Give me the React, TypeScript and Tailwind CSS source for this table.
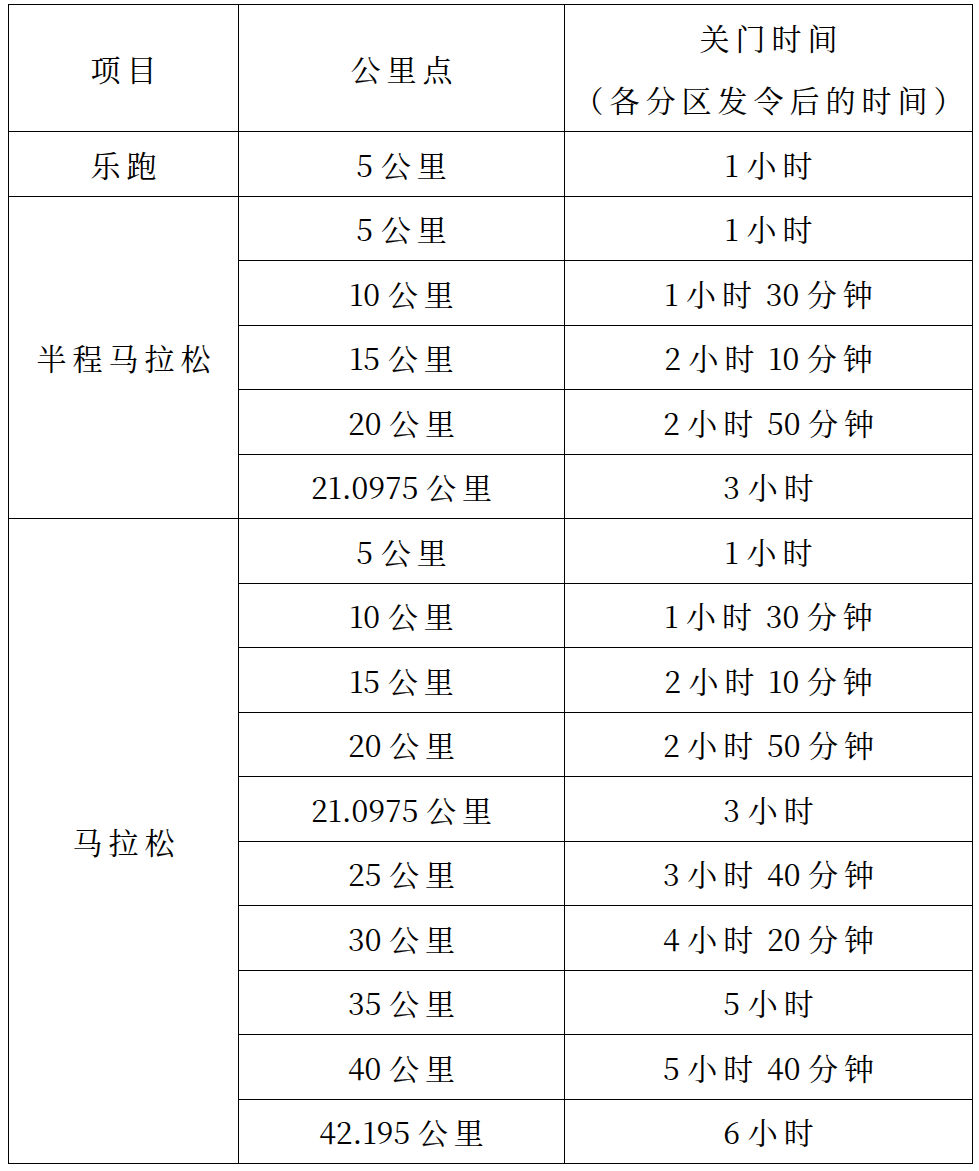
type Row = { km: string; time: string };

const halfRows: Row[] = [
  { km: '5 公里', time: '1 小时' },
  { km: '10 公里', time: '1 小时 30 分钟' },
  { km: '15 公里', time: '2 小时 10 分钟' },
  { km: '20 公里', time: '2 小时 50 分钟' },
  { km: '21.0975 公里', time: '3 小时' },
];

const fullRows: Row[] = [
  { km: '5 公里', time: '1 小时' },
  { km: '10 公里', time: '1 小时 30 分钟' },
  { km: '15 公里', time: '2 小时 10 分钟' },
  { km: '20 公里', time: '2 小时 50 分钟' },
  { km: '21.0975 公里', time: '3 小时' },
  { km: '25 公里', time: '3 小时 40 分钟' },
  { km: '30 公里', time: '4 小时 20 分钟' },
  { km: '35 公里', time: '5 小时' },
  { km: '40 公里', time: '5 小时 40 分钟' },
  { km: '42.195 公里', time: '6 小时' },
];

const CJK = /([\u4e00-\u9fff\uff08\uff09]+)/;

// CJK runs get the wide character spacing, digits stay tight
function Txt({ text }: { text: string }) {
  const parts = text.split(CJK).filter(Boolean);
  return (
    <>
      {parts.map((p, i) =>
        CJK.test(p) ? (
          <span
            key={i}
            className={
              i === parts.length - 1
                ? 'leading-none tracking-[6px] -mr-[6px]'
                : 'leading-none tracking-[6px]'
            }
          >
            {p}
          </span>
        ) : (
          <span key={i} className="leading-none">
            {p}
          </span>
        ),
      )}
    </>
  );
}

const cell =
  "border border-black p-0 text-center align-middle font-['Noto_Serif_CJK_SC',serif] text-[30px] font-normal leading-[40px] text-black";

export default function App() {
  return (
    <div className="min-h-[1171px] bg-white pl-2 pt-1">
      <table className="w-[964px] table-fixed border-collapse">
        <colgroup>
          <col className="w-[230px]" />
          <col className="w-[326px]" />
          <col className="w-[408px]" />
        </colgroup>
        <thead>
          <tr className="h-[127px]">
            <th className={cell}>
              <Txt text="项目" />
            </th>
            <th className={cell}>
              <Txt text="公里点" />
            </th>
            <th className={cell}>
              <div className="leading-[62px]">
                <div>
                  <Txt text="关门时间" />
                </div>
                <div>
                  <Txt text="（各分区发令后的时间）" />
                </div>
              </div>
            </th>
          </tr>
        </thead>
        <tbody>
          <tr className="h-[64.5px]">
            <td className={cell}>
              <Txt text="乐跑" />
            </td>
            <td className={cell}>
              <Txt text="5 公里" />
            </td>
            <td className={cell}>
              <Txt text="1 小时" />
            </td>
          </tr>
          {halfRows.map((r, i) => (
            <tr key={`h${i}`} className="h-[64.5px]">
              {i === 0 && (
                <td rowSpan={halfRows.length} className={cell}>
                  <Txt text="半程马拉松" />
                </td>
              )}
              <td className={cell}>
                <Txt text={r.km} />
              </td>
              <td className={cell}>
                <Txt text={r.time} />
              </td>
            </tr>
          ))}
          {fullRows.map((r, i) => (
            <tr key={`f${i}`} className="h-[64.5px]">
              {i === 0 && (
                <td rowSpan={fullRows.length} className={cell}>
                  <Txt text="马拉松" />
                </td>
              )}
              <td className={cell}>
                <Txt text={r.km} />
              </td>
              <td className={cell}>
                <Txt text={r.time} />
              </td>
            </tr>
          ))}
        </tbody>
      </table>
    </div>
  );
}
